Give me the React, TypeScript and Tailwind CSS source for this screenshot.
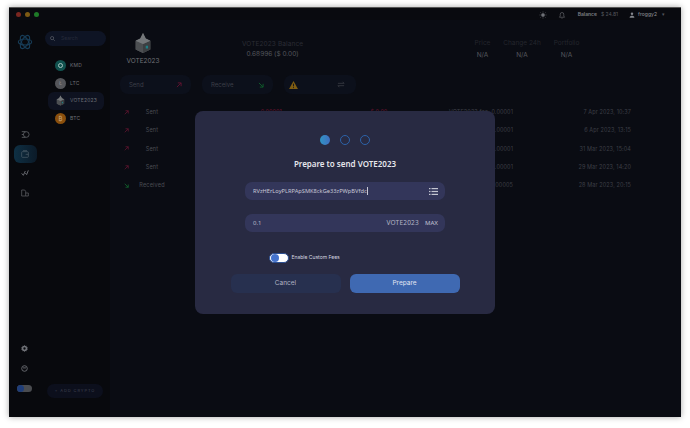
import React from "react";

const font = { fontFamily: "Inter, 'Liberation Sans', sans-serif" };

function Arrow({ color, down, size = 8 }: { color: string; down?: boolean; size?: number }) {
  return (
    <svg width={size} height={size} viewBox="0 0 10 10" fill="none" stroke={color} strokeWidth="1.6">
      {down ? <path d="M1.5 1.5L8.5 8.5M8.5 3V8.5H3" /> : <path d="M1.5 8.5L8.5 1.5M3 1.5H8.5V7" />}
    </svg>
  );
}

function Cube({ size }: { size: number }) {
  return (
    <svg width={size} height={size} viewBox="0 0 24 24">
      <path d="M12 1L15 7L20 9.5V19L12 23L4 19V9.5L9 7Z" fill="#5d6062" />
      <path d="M12 13L20 9.5V19L12 23Z" fill="#3c3f42" />
      <path d="M4 9.5L12 13V23L4 19Z" fill="#4c4f52" />
      <path d="M4 9.5L9 7L12 1L15 7L20 9.5L12 13Z" fill="#74777a" />
      <rect x="15" y="15" width="2.5" height="3" fill="#1f7f86" />
    </svg>
  );
}

function Coin({ name, bg, active, mark }: { name: string; bg: string; active?: boolean; mark: React.ReactNode }) {
  return (
    <div className={`flex items-center h-[17.5px] pl-[7px] rounded-md ${active ? "bg-[#0e1220]" : ""}`}>
      <div className={`w-[11px] h-[11px] rounded-full flex items-center justify-center shrink-0 ${bg}`}>{mark}</div>
      <span className="ml-[4px] text-[5px] tracking-[0.2px] text-[#6d6f76]">{name}</span>
    </div>
  );
}

function Rail({ active, children }: { active?: boolean; children: React.ReactNode }) {
  return (
    <div className={`w-[23px] h-[18px] rounded-md flex items-center justify-center ${active ? "bg-gradient-to-r from-[#0e3044] to-[#0b1a28]" : ""}`}>{children}</div>
  );
}

const rows = [
  { t: "Sent", c: "#5f1430", a: "0.00001", d: "7 Apr 2023, 10:37", first: true },
  { t: "Sent", c: "#5f1430", a: "0.00001", d: "6 Apr 2023, 13:15" },
  { t: "Sent", c: "#5f1430", a: "0.00001", d: "31 Mar 2023, 15:04" },
  { t: "Sent", c: "#5f1430", a: "0.00001", d: "29 Mar 2023, 14:20" },
  { t: "Received", c: "#11662f", a: "0.00005", d: "28 Mar 2023, 20:15", down: true },
];

export default function App() {
  return (
    <div style={font} className="w-[690px] h-[428px] bg-white pt-[7px] pl-[9px] overflow-hidden">
      <div className="relative w-[672px] h-[410px] bg-[#0a0c13] shadow-[0_0_6px_rgba(0,0,0,0.35)] flex flex-col border-t border-[#555]">
        {/* title bar */}
        <div className="h-[12px] bg-[#090a0f] flex items-center pl-[7px] pr-[16px] shrink-0">
          <div className="flex gap-[4px] mt-[1px]">
            <span className="w-[5px] h-[5px] rounded-full bg-[#7a2620]" />
            <span className="w-[5px] h-[5px] rounded-full bg-[#7d5a14]" />
            <span className="w-[5px] h-[5px] rounded-full bg-[#1e7a28]" />
          </div>
          <div className="ml-auto flex items-center text-[5px] text-[#77797f] mt-[1px]">
            <svg width="8" height="8" viewBox="0 0 16 16" fill="#6e7076" stroke="#6e7076" strokeWidth="1.2">
              <circle cx="8" cy="8" r="3" />
              <path d="M8 1v2M8 13v2M1 8h2M13 8h2M3 3l1.4 1.4M11.6 11.6L13 13M13 3l-1.4 1.4M4.4 11.6L3 13" />
            </svg>
            <svg className="ml-[11px]" width="8" height="8" viewBox="0 0 16 16" fill="none" stroke="#6e7076" strokeWidth="1.2">
              <path d="M3 12.5h10L11.5 10V6.5a3.5 3.5 0 0 0-7 0V10ZM7 14.5h2" />
            </svg>
            <span className="ml-[12px] font-semibold text-[#7b7d83]">Balance</span>
            <span className="ml-[4px] text-[#55575d]">$ 24.81</span>
            <svg className="ml-[11px]" width="6" height="6" viewBox="0 0 10 10" fill="#85878d">
              <circle cx="5" cy="3" r="2" />
              <path d="M1 9.5c0-2.5 2-3.3 4-3.3s4 .8 4 3.3Z" />
            </svg>
            <span className="ml-[3px] font-medium text-[#85878d]">froggy2</span>
            <span className="ml-[5px] text-[#55575d]">▾</span>
          </div>
        </div>

        <div className="flex flex-1 min-h-0">
          {/* icon rail */}
          <div className="w-[32px] bg-[#08090d] flex flex-col items-center pb-[25px] shrink-0">
            <svg className="mt-[14px]" width="16" height="16" viewBox="0 0 24 24" fill="none" stroke="#173c57" strokeWidth="1.7">
              <ellipse cx="12" cy="12" rx="11" ry="5" transform="rotate(60 12 12)" />
              <ellipse cx="12" cy="12" rx="11" ry="5" transform="rotate(-60 12 12)" />
              <ellipse cx="12" cy="12" rx="10" ry="4.5" />
            </svg>
            <div className="mt-[75px] flex flex-col gap-[1.5px] items-center">
              <Rail>
                <svg width="9" height="9" viewBox="0 0 12 12" fill="none" stroke="#66686e" strokeWidth="1">
                  <circle cx="7" cy="6" r="3.8" />
                  <path d="M1 2.2h5M1 6h2.5M1 9.8h5" />
                </svg>
              </Rail>
              <Rail active>
                <svg width="8" height="8" viewBox="0 0 12 12" fill="none" stroke="#52606c" strokeWidth="1">
                  <rect x="1" y="2.5" width="10" height="8.5" rx="1.2" />
                  <path d="M3 1h6M7 6.5h4" />
                </svg>
              </Rail>
              <Rail>
                <svg width="8" height="8" viewBox="0 0 12 12" fill="none" stroke="#66686e" strokeWidth="1.5">
                  <path d="M1 6.5l2.5 3L6.5 3M6.5 6l2 2.5L11 2" />
                </svg>
              </Rail>
              <Rail>
                <svg width="8" height="8" viewBox="0 0 12 12" fill="none" stroke="#66686e" strokeWidth="1">
                  <path d="M1 1.5h4.5L7 3.5v7H1ZM7 6h4v4.5H7" />
                </svg>
              </Rail>
            </div>
            <div className="mt-auto flex flex-col items-center -ml-[2px]">
              <svg width="7" height="7" viewBox="0 0 12 12" fill="#6f7177">
                <path d="M6 0l1.2 1.8 2.1-.5.4 2.1 2 .9L10.7 6l1 1.7-2 .9-.4 2.1-2.1-.5L6 12l-1.2-1.8-2.1.5-.4-2.1-2-.9L1.3 6 .3 4.3l2-.9.4-2.1 2.1.5ZM6 4a2 2 0 1 0 0 4 2 2 0 0 0 0-4Z" fillRule="evenodd" />
              </svg>
              <svg className="mt-[13px]" width="7" height="7" viewBox="0 0 12 12" fill="none" stroke="#6f7177" strokeWidth="1.5">
                <circle cx="6" cy="6" r="4.8" />
                <path d="M3.5 5h5" />
              </svg>
              <div className="mt-[13px] w-[15px] h-[7px] rounded-full bg-[#4a4c50] flex items-center">
                <span className="w-[7px] h-[7px] rounded-full bg-[#1f3d78]" />
              </div>
            </div>
          </div>

          {/* coin list */}
          <div className="w-[69px] bg-[#08090d] flex flex-col shrink-0 pl-[5px]">
            <div className="mt-[11px] ml-[-1px] w-[61px] h-[15px] rounded-full bg-[#0e1424] flex items-center pl-[5px]">
              <svg width="5" height="5" viewBox="0 0 10 10" fill="none" stroke="#6a6d75" strokeWidth="1.2">
                <circle cx="4.2" cy="4.2" r="3.2" />
                <path d="M6.7 6.7L9.5 9.5" />
              </svg>
              <span className="ml-[6px] text-[5px] text-[#262b3a]">Search</span>
            </div>
            <div className="mt-[11px] flex flex-col ml-[2px] w-[56px]">
              <Coin name="KMD" bg="bg-[#11524f]" mark={<span className="w-[5px] h-[5px] rounded-full border border-[#a7c3bf]" />} />
              <Coin name="LTC" bg="bg-[#55565a]" mark={<span className="text-[5px] text-[#85868a]">Ł</span>} />
              <Coin name="VOTE2023" bg="" active mark={<Cube size={11} />} />
              <Coin name="BTC" bg="bg-[#8a4f0c]" mark={<span className="text-[6px] text-[#c9ad88]">₿</span>} />
            </div>
            <div className="mt-auto mb-[19px] ml-[1px] w-[56px] h-[14px] rounded-full bg-[#0c0f1c] flex items-center justify-center text-[4px] tracking-[0.9px] text-[#3f4250]">
              + ADD CRYPTO
            </div>
          </div>

          {/* main */}
          <div className="flex-1 min-w-0 flex flex-col pl-[10px] pr-[50px]">
            <div className="flex h-[41px] shrink-0 mt-[12px]">
              <div className="w-[44px] ml-[1px] flex flex-col items-center">
                <Cube size={22} />
                <span className="mt-[3px] text-[6.5px] text-[#6f7177]">VOTE2023</span>
              </div>
              <div className="ml-[77px] mt-[8px] flex flex-col items-center text-[6.5px]">
                <span className="text-[#2b2d35] tracking-[0.1px]">VOTE2023 Balance</span>
                <span className="text-[#54565c]">0.68996 ($ 0.00)</span>
              </div>
              <div className="ml-auto mr-[51px] mt-[7px] flex gap-[10px] text-[6.5px]">
                {[
                  ["Price", 17],
                  ["Change 24h", 42],
                  ["Portfolio", 27],
                ].map(([l, w]) => (
                  <div key={l as string} className="flex flex-col items-center" style={{ width: w as number }}>
                    <span className="text-[#24262d] whitespace-nowrap">{l}</span>
                    <span className="text-[#56585e] mt-[2.5px]">N/A</span>
                  </div>
                ))}
              </div>
            </div>

            <div className="flex mt-[2px] gap-[11px] h-[19px] shrink-0 text-[6px]">
              <div className="w-[71px] rounded-lg bg-[#0c101b] flex items-center justify-between px-[9px] text-[#3d3f48]">
                Send <Arrow color="#5f1430" size={6} />
              </div>
              <div className="w-[71px] rounded-lg bg-[#0c101b] flex items-center justify-between px-[9px] text-[#3d3f48]">
                Receive <Arrow color="#0f5c2b" down size={6} />
              </div>
              <div className="w-[72px] rounded-lg bg-[#0c101b] flex items-center justify-between pl-[5px] pr-[11px]">
                <svg width="9" height="8" viewBox="0 0 10 9">
                  <path d="M5 0L10 9H0Z" fill="#7f5d12" />
                  <path d="M5 3v3M5 7v1" stroke="#0c101b" strokeWidth="1" />
                </svg>
                <svg width="8" height="7" viewBox="0 0 10 9" fill="none" stroke="#3a3c44" strokeWidth="1">
                  <path d="M1 3h8L7 1M9 6H1l2 2" />
                </svg>
              </div>
            </div>

            <div className="mt-[9px] flex flex-col text-[5.5px]">
              {rows.map((r) => (
                <div key={r.d} className="flex items-center h-[18.3px]">
                  <div className="w-[7px] ml-[4px]"><Arrow color={r.c} down={r.down} size={5} /></div>
                  <span className="w-[40px] text-center ml-[1px] text-[#4a4c53] tracking-[0.2px]">{r.t}</span>
                  {r.first && <span className="ml-[86px] w-[24px] text-[#64122f] text-center">-{r.a}</span>}
                  {r.first && <span className="ml-[86px] text-[#64122f]">-$ 0.00</span>}
                  <span className="ml-auto text-[#3d3f46] tracking-[0.1px]">{r.first ? "VOTE2023 fee: " : ""}{r.a}</span>
                  <span className="w-[118px] text-right text-[#3d3f46] tracking-[0.1px]">{r.d}</span>
                </div>
              ))}
            </div>
          </div>
        </div>

        {/* modal */}
        <div style={{ fontFamily: "'Noto Sans', sans-serif" }} className="absolute left-[186px] top-[103px] w-[300px] h-[203px] rounded-[8px] bg-[#282a42] flex flex-col items-center">
          <div className="mt-[24px] flex gap-[10px]">
            <span className="w-[10px] h-[10px] rounded-full bg-gradient-to-r from-[#2f93c4] to-[#3f6fc0]" />
            <span className="w-[10px] h-[10px] rounded-full border border-[#2c62a8]" />
            <span className="w-[10px] h-[10px] rounded-full border border-[#2c62a8]" />
          </div>
          <div className="mt-[12px] text-[8px] leading-[13px] font-semibold text-[#e6e6ec]">
            Prepare to send VOTE2023
          </div>
          <div className="mt-[12px] w-[200px] h-[18px] rounded-[7px] bg-[#33365a] flex items-center pl-[8px] pr-[7px] text-[5.7px] text-[#c7c8d6]">
            <span>RVzHErLoyPLRPApSMK8ckGe33zPWpBVfdc</span>
            <span className="w-px h-[8px] bg-[#c7c8d6]" />
            <svg className="ml-auto" width="9" height="7" viewBox="0 0 9 7" fill="#c4c6d2">
              <rect x="0" y="0" width="1.5" height="1.2" />
              <rect x="2.5" y="0" width="6.5" height="1.2" />
              <rect x="0" y="2.9" width="1.5" height="1.2" />
              <rect x="2.5" y="2.9" width="6.5" height="1.2" />
              <rect x="0" y="5.8" width="1.5" height="1.2" />
              <rect x="2.5" y="5.8" width="6.5" height="1.2" />
            </svg>
          </div>
          <div className="mt-[14px] w-[200px] h-[18px] rounded-[7px] bg-[#33365a] flex items-center pl-[8px] pr-[7px] text-[6px] text-[#b4b6c6]">
            <span>0.1</span>
            <span className="ml-auto text-[6.5px] tracking-[0.2px]">VOTE2023</span>
            <span className="ml-[6px] font-medium">MAX</span>
          </div>
          <div className="mt-[21px] ml-[-1px] w-[210px] flex items-center">
            <span className="ml-[29px] w-[20px] h-[10px] rounded-full bg-white flex items-center pl-[1px] border border-[#2c4f92]">
              <span className="w-[8px] h-[8px] rounded-full bg-[#4472cc]" />
            </span>
            <span style={font} className="ml-[3px] text-[5px] text-[#d6d7e0]">Enable Custom Fees</span>
          </div>
          <div style={font} className="mt-[11px] flex gap-[9px]">
            <button className="w-[110px] h-[19px] rounded-[6px] bg-[#27304f] text-[6.5px] text-[#b0b3c4]">Cancel</button>
            <button className="w-[110px] h-[19px] rounded-[6px] bg-[#3f69b2] text-[6.5px] text-[#e2e6f2]">Prepare</button>
          </div>
        </div>
      </div>
    </div>
  );
}
